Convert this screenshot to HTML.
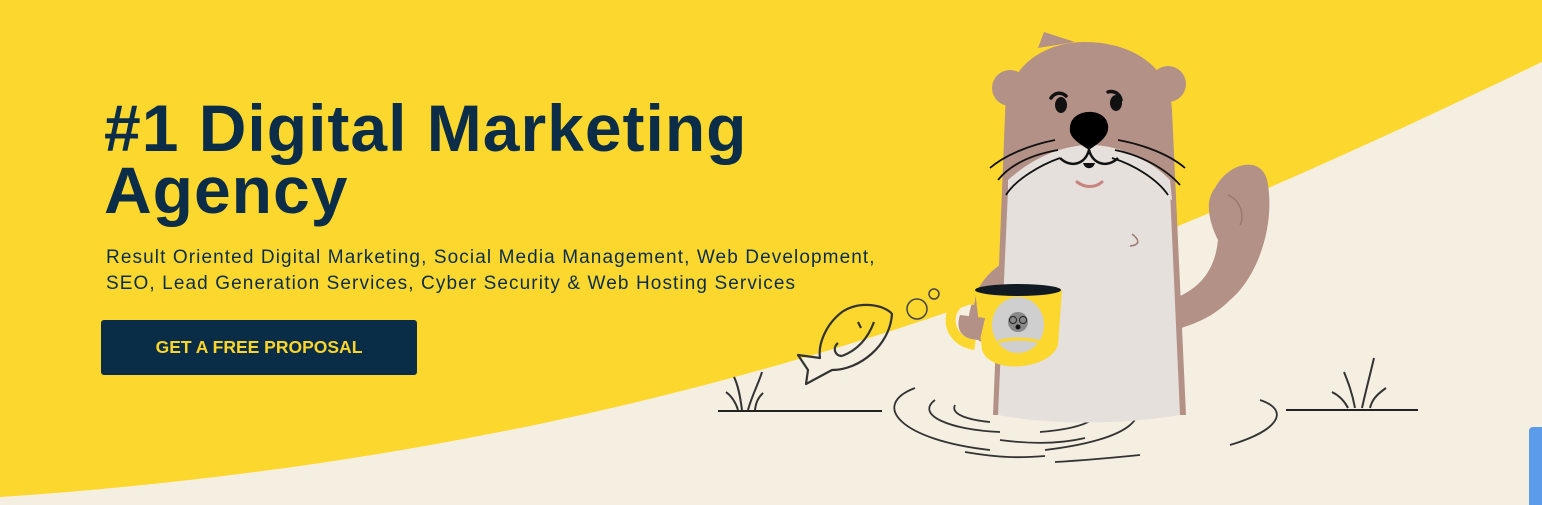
<!DOCTYPE html>
<html><head><meta charset="utf-8"><style>
html,body{margin:0;padding:0;}
body{width:1542px;height:505px;overflow:hidden;position:relative;background:#f5efe2;font-family:"Liberation Sans",sans-serif;}
svg.bg{position:absolute;left:0;top:0;}
h1{position:absolute;left:104px;top:97px;margin:0;font-size:66px;line-height:62px;font-weight:bold;color:#0b2d48;letter-spacing:1px;white-space:nowrap;}
p{position:absolute;left:106px;top:245px;margin:0;font-size:19px;line-height:26px;color:#0b2d48;letter-spacing:1.1px;white-space:nowrap;}
.btn{position:absolute;left:101px;top:320px;width:316px;height:55px;background:#0a2d47;border-radius:3px;color:#fbd52c;font-size:17.5px;font-weight:bold;line-height:55px;text-align:center;}
.tab{position:absolute;left:1529px;top:427px;width:13px;height:78px;background:#5b9bea;border-radius:4px 0 0 0;}
</style></head><body>
<svg class="bg" width="1542" height="505" viewBox="0 0 1542 505">
<path d="M0 0 H1542 V62 C1150 250 700 450 0 497 Z" fill="#fcd82e"/>
<path d="M718 411 H882 M1286 410 H1418" stroke="#222" stroke-width="2" fill="none"/>
<g stroke="#333" stroke-width="2" fill="none">
<path d="M738 410 C735 400 730 395 726 392 M742 410 C740 395 738 385 734 377 M748 410 C752 395 758 385 762 372 M755 410 C756 402 758 398 763 393"/>
<path d="M1348 408 C1344 400 1338 395 1332 392 M1355 408 C1352 392 1348 382 1344 372 M1362 408 C1366 390 1370 375 1374 358 M1370 408 C1372 400 1376 395 1386 388"/>
</g>
<g stroke="#333" stroke-width="1.8" fill="none">
<path d="M915 388 C870 405 900 440 990 450"/>
<path d="M1045 450 C1130 440 1160 415 1120 390"/>
<path d="M935 400 C915 415 950 430 1000 432"/>
<path d="M1040 432 C1090 428 1110 415 1090 402"/>
<path d="M1000 440 C1030 444 1060 444 1085 438"/>
<path d="M965 452 C1000 458 1020 458 1045 456"/>
<path d="M955 405 C950 415 970 420 990 422"/>
<path d="M1260 400 C1290 410 1280 430 1230 445"/>
<path d="M1055 462 C1090 460 1110 458 1140 455"/>
</g>
<circle cx="917" cy="309" r="10" fill="none" stroke="#444" stroke-width="1.5"/>
<circle cx="934" cy="294" r="5" fill="none" stroke="#444" stroke-width="1.5"/>
<g stroke="#333" stroke-width="2.2" fill="none" stroke-linejoin="round">
<path d="M892 314 C885 305 860 300 842 312 C825 325 818 345 820 358 L798 355 L808 370 L806 384 L832 370 C860 370 890 345 892 314 Z"/>
<path d="M874 322 C868 338 858 350 842 356"/>
<path d="M838 343 C832 348 835 356 842 356"/>
<path d="M858 322 L861 328"/>
</g>
<path d="M1170 300 C1200 290 1215 270 1218 240 C1208 220 1205 200 1215 188 C1230 160 1265 155 1268 185 C1275 230 1255 280 1230 300 C1210 320 1190 325 1175 330 Z" fill="#b39186"/>
<path d="M1228 195 C1240 200 1245 215 1240 225" stroke="#9a7a70" stroke-width="1.5" fill="none"/>
<circle cx="1010" cy="88" r="18" fill="#b39186"/>
<circle cx="1168" cy="84" r="18" fill="#b39186"/>
<path d="M993 415 L1005 115 C1005 70 1040 42 1085 42 C1130 42 1170 65 1172 110 L1186 415 Z" fill="#b39186"/>
<path d="M1038 48 L1044 32 L1075 42 Z" fill="#b39186"/>
<path d="M998 415 L1008 190 C1020 170 1060 160 1090 160 C1130 160 1160 170 1170 190 L1180 415 C1120 425 1050 425 998 415 Z" fill="#e5e0dc"/>
<path d="M1008 180 C1030 160 1060 145 1090 145 C1120 145 1150 160 1170 180 L1172 200 C1140 185 1040 185 1008 200 Z" fill="#e5e0dc"/>
<path d="M1000 265 C985 275 975 290 970 310 C965 330 975 345 995 345 L1000 345 Z" fill="#b39186"/>
<path d="M1051 98 C1055 92 1062 92 1066 96 M1108 92 C1114 90 1120 94 1121 100" stroke="#111" stroke-width="3.5" fill="none" stroke-linecap="round"/>
<ellipse cx="1061" cy="105" rx="6" ry="8" fill="#111"/>
<ellipse cx="1116" cy="103" rx="6" ry="8" fill="#111"/>
<path d="M1070 128 C1070 108 1105 106 1108 125 C1110 138 1095 145 1089 150 C1082 145 1068 138 1070 128 Z" fill="#000"/>
<path d="M1060 158 C1070 168 1085 165 1089 150 C1093 165 1108 168 1118 158" stroke="#111" stroke-width="2.5" fill="none"/>
<path d="M1083 163 C1085 170 1093 170 1095 163" fill="#111"/>
<path d="M1077 182 C1085 188 1095 188 1102 182" stroke="#c8837f" stroke-width="3" fill="none" stroke-linecap="round"/>
<g stroke="#111" stroke-width="1.8" fill="none">
<path d="M1055 140 C1030 145 1005 155 990 168"/>
<path d="M1058 150 C1030 155 1010 165 998 180"/>
<path d="M1060 158 C1040 165 1015 180 1006 195"/>
<path d="M1118 140 C1145 145 1170 155 1185 168"/>
<path d="M1115 150 C1140 155 1165 168 1180 185"/>
<path d="M1112 158 C1135 165 1158 180 1168 195"/>
</g>
<path d="M1132 234 C1140 240 1140 245 1130 246" stroke="#9a7a70" stroke-width="1.5" fill="none"/>
<path d="M975 300 C945 295 940 340 975 345" stroke="#fcd82e" stroke-width="10" fill="none"/>
<path d="M975 290 L1062 290 L1058 345 C1050 370 990 375 982 350 Z" fill="#fcd82e"/>
<ellipse cx="1018" cy="290" rx="43" ry="6" fill="#111a20"/>
<ellipse cx="1018" cy="325" rx="26" ry="28" fill="#cfcfcf"/>
<circle cx="1018" cy="322" r="10" fill="#888"/>
<circle cx="1013" cy="320" r="3.5" fill="none" stroke="#222"/>
<circle cx="1023" cy="320" r="3.5" fill="none" stroke="#222"/>
<circle cx="1018" cy="327" r="2.5" fill="#111"/>
<path d="M998 342 C1008 338 1028 338 1040 342" stroke="#fcd82e" stroke-width="3" fill="none"/>
<path d="M960 315 C955 330 962 340 980 340 L985 318 Z" fill="#b39186"/>
</svg>
<h1>#1 Digital Marketing<br>Agency</h1>
<p>Result Oriented Digital Marketing, Social Media Management, Web Development,<br>SEO, Lead Generation Services, Cyber Security &amp; Web Hosting Services</p>
<div class="btn">GET A FREE PROPOSAL</div>
<div class="tab"></div>
</body></html>
